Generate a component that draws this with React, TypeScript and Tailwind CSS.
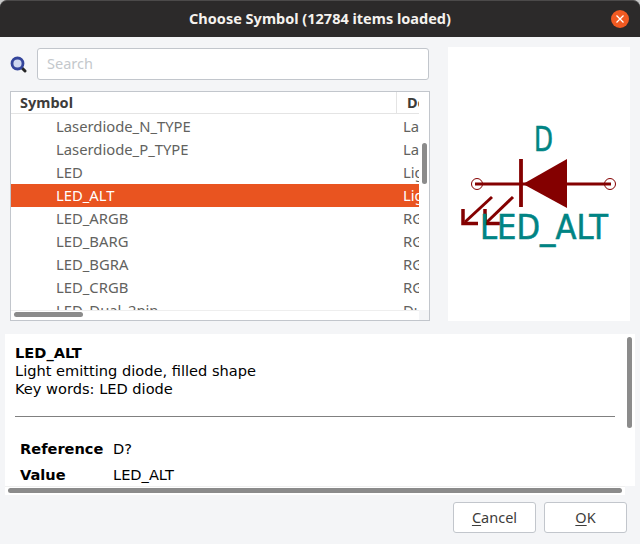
const rows = [
  ["Laserdiode_N_TYPE", "Laser diode"],
  ["Laserdiode_P_TYPE", "Laser diode"],
  ["LED", "Light emitting diode"],
  ["LED_ALT", "Light emitting diode"],
  ["LED_ARGB", "RGB LED"],
  ["LED_BARG", "RGB LED"],
  ["LED_BGRA", "RGB LED"],
  ["LED_CRGB", "RGB LED"],
  ["LED_Dual_2pin", "Dual LED"],
];

function SearchIcon() {
  return (
    <svg width="17" height="17" viewBox="0 0 17 17">
      <path d="M11.500 11.500L15 15" stroke="#262626" strokeWidth="3" strokeLinecap="round" />
      <circle cx="7.500" cy="7.500" r="5.500" fill="#cfd8f0" stroke="#34459b" strokeWidth="2.800" />
    </svg>
  );
}

function SymbolPreview() {
  return (
    <svg width="182" height="274" viewBox="448 47 182 274" className="block font-['DejaVu_Sans',sans-serif]">
      <g fill="none" stroke="#840000">
        <circle cx="477" cy="184" r="5.500" strokeWidth="1" />
        <circle cx="610" cy="184" r="5.500" strokeWidth="1" />
        <path d="M475 184H611" strokeWidth="3.200" />
        <path d="M521 159V207" strokeWidth="3.800" />
        <path d="M492 197L465 222" strokeWidth="3" />
        <path d="M463 209V223.500H478" strokeWidth="3.500" />
        <path d="M513 197L487 222" strokeWidth="3" />
        <path d="M485 209V223.500H500" strokeWidth="3.500" />
      </g>
      <path d="M567 159V208L523 184Z" fill="#840000" />
      <g fill="#008484" stroke="#008484" strokeWidth="0.600" fontSize="34">
        <text x="534" y="151" textLength="19" lengthAdjust="spacingAndGlyphs">D</text>
        <text x="480" y="239" textLength="128" lengthAdjust="spacingAndGlyphs">LED_ALT</text>
      </g>
    </svg>
  );
}

export default function App() {
  return (
    <div className="flex h-[544px] w-[640px] flex-col overflow-hidden bg-[#c8c8c8] font-['Noto_Sans',sans-serif]">
      <div className="relative flex h-[37px] shrink-0 items-center justify-center rounded-t-[7px] border-t border-[#4c4a4a] bg-[#2c2a2a]">
        <span className="text-[14.500px] font-bold text-[#f5f2ee]">Choose Symbol (12784 items loaded)</span>
        <div className="absolute right-[11px] top-[9px] flex h-[18px] w-[18px] items-center justify-center rounded-full bg-[#f05a22]">
          <svg width="10" height="10" viewBox="0 0 10 10">
            <path d="M1.500 1.500L8.500 8.500M8.500 1.500L1.500 8.500" stroke="#fff" strokeWidth="1.300" />
          </svg>
        </div>
      </div>

      <div className="flex min-h-0 flex-1 flex-col bg-[#f4f5f7]">
        <div className="flex h-[297px] shrink-0 pl-[10px] pt-[10px]">
          <div className="flex w-[420px] flex-col">
            <div className="flex items-center gap-[10px] pb-[11px] pt-[1px]">
              <SearchIcon />
              <div className="flex h-[32px] w-[392px] items-center rounded-[3px] border border-[#c2c6cc] bg-white pl-[9px] text-[14.500px] text-[#c4c8cc]">
                Search
              </div>
            </div>
            <div className="relative h-[230px] overflow-hidden border border-[#c2c6cc] bg-white">
              <div className="mb-[1px] flex h-[22px] border-b border-[#e4e4e4] text-[14.500px] font-bold leading-[21px] text-[#3d3c3a]">
                <div className="w-[385px] pl-[9px]">Symbol</div>
                <div className="flex-1 overflow-hidden whitespace-nowrap border-l border-[#e4e4e4] pl-[10px]">Description</div>
              </div>
              {rows.map(([name, desc], i) => (
                <div
                  key={name}
                  className={`flex h-[23px] items-center whitespace-nowrap text-[14.800px] ${
                    i === 3 ? "bg-[#e95420] text-white" : "text-[#62625e]"
                  }`}
                >
                  <div className="w-[392px] shrink-0 pl-[45px]">{name}</div>
                  <div className="w-[16px] shrink-0 overflow-hidden">{desc}</div>
                </div>
              ))}
              {/* scrollbars */}
              <div className="absolute inset-y-0 right-0 w-[10px] bg-white" />
              <div className="absolute inset-x-0 bottom-0 h-[10px] border-t border-[#eeeeee] bg-white" />
              <div className="absolute bottom-0 right-0 h-[10px] w-[10px] bg-[#f4f5f7]" />
              <div className="absolute bottom-[3px] left-[3px] h-[5px] w-[69px] rounded-full bg-[#8b8b8b]" />
              <div className="absolute right-[2px] top-[51px] h-[41px] w-[5px] rounded-full bg-[#8b8b8b]" />
            </div>
          </div>
          <div className="ml-[18px] h-[274px] bg-white">
            <SymbolPreview />
          </div>
        </div>

        <div className="relative mx-[5px] h-[161px] shrink-0 overflow-hidden bg-white font-['DejaVu_Sans',sans-serif] text-[14.600px] leading-[18px] text-black">
          <div className="pl-[10px] pt-[10px]">
            <div className="font-bold">LED_ALT</div>
            <div>Light emitting diode, filled shape</div>
            <div>Key words: LED diode</div>
            <div className="mt-[18px] h-px w-[600px] bg-[#808080]" />
            <div className="mt-[19px] flex h-[26px] items-center pl-[5px]">
              <div className="w-[93px] font-bold">Reference</div>
              <div>D?</div>
            </div>
            <div className="flex h-[26px] items-center pl-[5px]">
              <div className="w-[93px] font-bold">Value</div>
              <div>LED_ALT</div>
            </div>
          </div>
          {/* scrollbars */}
          <div className="absolute bottom-0 left-0 h-[9px] w-full border-t border-[#f0f0f0] bg-white" />
          <div className="absolute bottom-0 right-0 h-[9px] w-[10px] bg-[#f4f5f7]" />
          <div className="absolute bottom-[2px] left-[3px] h-[5px] w-[614px] rounded-full bg-[#8b8b8b]" />
          <div className="absolute right-[3px] top-[3px] h-[91px] w-[5px] rounded-full bg-[#8b8b8b]" />
        </div>

        <div className="flex justify-end gap-[8px] pr-[13px] pt-[7px] text-[14.500px] text-[#3d3c3a]">
          <button className="h-[31px] w-[83px] rounded-[3px] border border-[#c2c6cc] bg-white">
            <span className="underline underline-offset-2">C</span>ancel
          </button>
          <button className="h-[31px] w-[83px] rounded-[3px] border border-[#c2c6cc] bg-white">
            <span className="underline underline-offset-2">O</span>K
          </button>
        </div>
      </div>
    </div>
  );
}
